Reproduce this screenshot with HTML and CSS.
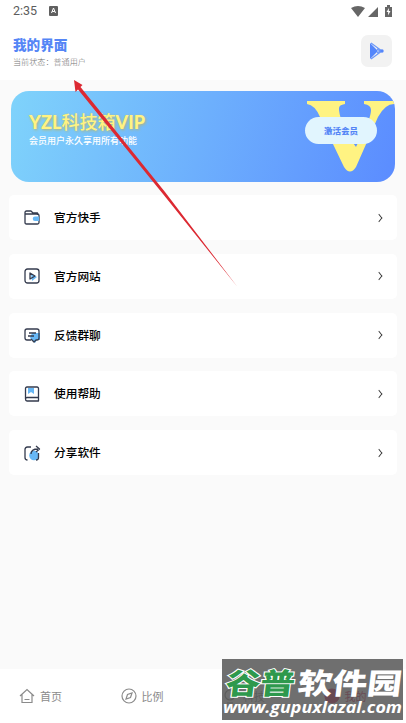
FILE: index.html
```html
<!DOCTYPE html>
<html lang="zh-CN">
<head>
<meta charset="utf-8">
<title>我的界面</title>
<link rel="stylesheet" href="styles.css">
</head>
<body>
<div class="screen">
  <div class="status">
    <span class="time">2:35</span>
    <svg class="badge" width="9" height="10" viewBox="0 0 9 10"><rect width="9" height="10" rx="1" fill="#606060"/><path d="M2.500 7 4.500 2 6.500 7M3.200 5.500h2.600" fill="none" stroke="#fff"/></svg>
    <svg class="signals" width="42" height="13" viewBox="0 0 42 13"><path d="M0 3Q7-1 14 3L7 12ZM27 2V12H17ZM34 2h2V0h3v2h2v10h-7Z" fill="#666"/><path d="M38 3 35.500 7h1.700L37 10.500 39.500 6h-1.700Z" fill="#fff"/></svg>
  </div>
  <header class="header">
    <div><h1>我的界面</h1><p>当前状态：普通用户</p></div>
    <div class="play"><svg width="16" height="18" viewBox="0 0 16 18"><path d="M1 1V17L9 9Z" fill="#5486fb"/><path d="M2 1 13 9 2 17M8 7l3 2-3 2" fill="none" stroke="#6c98f8" stroke-width="1.200"/><circle cx="13" cy="9" r="1.700" fill="#5486fb"/></svg></div>
  </header>
  <main>
    <section class="vip">
      <div class="vip-text"><h2><b>YZL</b>科技箱<b>VIP</b></h2><p>会员用户永久享用所有功能</p></div>
      <svg class="letter" width="88" height="72" viewBox="0 0 88 72"><path d="M0 0H38V3C32 4 32 6 32 9C33 20 41 35 49 46C54 36 64 18 64 9Q64 4 57 3V0H87V3Q78 3 71 16L49 66Q43 75 37 66L13 16Q8 4 0 3Z" fill="#fff382"/></svg>
      <span class="activate">激活会员</span>
    </section>
    <nav class="menu">
      <div class="row"><svg class="icon" viewBox="0 0 18 18"><path d="M2 5V3.500Q2 2 3.500 2H8l2 2h4.500v2M2 5h12.500Q16 5 16 6.500v7q0 1.500-1.500 1.500h-11Q2 15 2 13.500Z"/><path class="blue" d="M16 7.500h-4a2.200 2.200 0 0 0 0 4.500h4Z"/></svg><span>官方快手</span><i></i></div>
      <div class="row"><svg class="icon" viewBox="0 0 18 18"><rect x="2" y="2" width="14" height="14" rx="2.500"/><path class="blue" d="m8 7 6 3-5 4Z"/><path d="m7 6 5 3-5 3Z"/></svg><span>官方网站</span><i></i></div>
      <div class="row"><svg class="icon" viewBox="0 0 18 18"><path class="blue" d="M9 7h8v7h-3l-2 3-3-3-2-2Z"/><path d="M8 14H4q-2 0-2-2V5q0-2 2-2h10q2 0 2 2v7q0 2-2 2h-1l-2 2-3-3M6 7h7M5 10h6"/></svg><span>反馈群聊</span><i></i></div>
      <div class="row"><svg class="icon" viewBox="0 0 18 18"><path class="blue" d="M5 3h6v6L8 7 5 9Z"/><path d="M15.500 12.500V3.500Q15.500 2 14 2H4Q2.500 2 2.500 3.500V14q0 2 1.500 2h11.500v-3.500H4q-1.500 0-1.500 1.500"/></svg><span>使用帮助</span><i></i></div>
      <div class="row"><svg class="icon" viewBox="0 0 18 18"><circle class="blue" cx="11" cy="11.500" r="4.800"/><path d="M8 3H4.500Q2 3 2 5.500v8Q2 16 4.500 16M15.500 9v4.500q0 2.500-2.500 2.500M8 10Q8 5 15 5M13 2l3.500 3L13 8"/></svg><span>分享软件</span><i></i></div>
    </nav>
  </main>
  <footer class="tabs">
    <div class="tab"><svg class="tab-icon" viewBox="0 0 16 16"><path d="M1 8 8 1.500 15 8M3 6v8.500h10V6M5.500 11.500h5"/></svg><span>首页</span></div>
    <div class="tab"><svg class="tab-icon" viewBox="0 0 16 16"><circle cx="8" cy="8" r="7"/><path d="m11 5-1.500 4.500L5 11l1.500-4.500Z"/></svg><span>比例</span></div>
    <div class="tab"><svg class="tab-icon" viewBox="0 0 16 16"><circle cx="8" cy="7" r="5"/><path d="M5 15h6"/></svg><span>科技</span></div>
    <div class="tab active"><svg class="tab-icon" viewBox="0 0 16 16"><circle cx="8" cy="8" r="7"/></svg><span>我的</span></div>
  </footer>
  <svg class="arrow" width="170" height="212" viewBox="0 0 170 212"><path d="M4 0 12.500 5 10.500 7 95 112 167.500 207 93 114 8 9.500 5.500 12Z" fill="#dc2932"/></svg>
  <div class="watermark">
    <svg width="181" height="61" viewBox="0 0 181 61">
      <g transform="translate(4 0) skewX(-7)">
        <text class="cn green" x="3" y="35.500" textLength="69" lengthAdjust="spacingAndGlyphs">谷普</text>
        <text class="cn" x="75" y="35.500" textLength="104" lengthAdjust="spacingAndGlyphs">软件园</text>
      </g>
      <text class="url" x="1" y="54" textLength="179" lengthAdjust="spacingAndGlyphs">www.gupuxlazal.com</text>
    </svg>
  </div>
</div>
</body>
</html>
```
FILE: styles.css
```css
* { box-sizing: border-box; }
body { margin: 0; font-family: "Noto Sans CJK SC", sans-serif; background: #fafafa; }
h1, h2, p { margin: 0; }
.screen { position: relative; width: 406px; height: 723px; display: flex; flex-direction: column; overflow: hidden; }
.status { height: 24px; background: #fff; display: flex; align-items: center; padding: 0 13px; }
.time { font: 12.5px/14px Roboto, sans-serif; color: #5c5c5c; width: 36px; margin-top: -2px; }
.badge { margin-top: -2px; }
.signals { margin-left: auto; margin-top: -2px; }
.header { height: 56px; background: #fff; display: flex; justify-content: space-between; padding: 11px 14px 0 13px; }
h1 { font-size: 13.6px; line-height: 19px; font-weight: 900; color: #5586f6; }
.header p { font-size: 8.1px; line-height: 15px; color: #777; font-weight: 300; }
.play { width: 31px; height: 32px; border-radius: 7px; background: #f2f2f2; display: flex; align-items: center; justify-content: center; }
main { flex: 1; padding: 11px 9px 0; }
.vip { position: relative; height: 91px; margin: 0 2px; border-radius: 18px; background: linear-gradient(105deg, #7fd3fb, #5b8cff); padding: 18px 18px; overflow: hidden; }
h2 { font-size: 18px; line-height: 25px; height: 25px; font-weight: 500; color: #fff382; text-shadow: 1px 1px 3px #b7b56c; white-space: nowrap; }
h2 b { font-family: Lato, sans-serif; font-weight: 900; font-size: 18px; letter-spacing: .1px; }
.vip p { font-size: 9px; line-height: 14px; color: #fff; font-weight: 500; }
.letter { position: absolute; left: 296px; top: 10px; }
.activate { position: absolute; left: 294px; top: 26px; width: 72px; height: 27px; border-radius: 14px; background: #e1f5fe; color: #5485f6; font-size: 8.5px; line-height: 26px; font-weight: 900; text-align: center; }
.menu { margin-top: 13px; display: flex; flex-direction: column; gap: 13.8px; }
.row { height: 45px; background: #fff; border-radius: 5px; display: flex; align-items: center; padding: 0 15px 0 14px; }
.icon { width: 18px; height: 18px; fill: none; stroke: #343b4e; stroke-width: 1.3; stroke-linejoin: round; }
.icon .blue { fill: #67b7f5; stroke: none; }
.row span { margin: -2px 0 0 13px; font-size: 11.7px; font-weight: 500; color: #000; }
.row i { margin-left: auto; width: 6px; height: 6px; border: solid #333; border-width: 1px 1px 0 0; transform: scaleX(.8) rotate(45deg); }
.tabs { height: 54px; background: #fff; display: flex; }
.tab { width: 101.5px; display: flex; align-items: center; gap: 5px; padding: 0 0 1px 19px; color: #8b8b8b; font-size: 11px; }
.tab-icon { width: 16px; height: 16px; fill: none; stroke: #8b8b8b; stroke-width: 1.2; }
.active { color: #d51654; }
.active .tab-icon { fill: #d51654; stroke: #d51654; }
.arrow { position: absolute; left: 70px; top: 80px; }
.watermark { position: absolute; left: 222px; top: 659px; width: 181px; height: 61px; background: rgba(83, 83, 83, .84); }
.watermark svg { display: block; }
.cn { font: 900 29px "Noto Sans CJK SC", sans-serif; fill: #fff; }
.green { fill: #2e994d; stroke: #fff; stroke-width: 2px; paint-order: stroke; }
.url { font: italic 700 16.5px "Open Sans", sans-serif; fill: #fff; }
```
